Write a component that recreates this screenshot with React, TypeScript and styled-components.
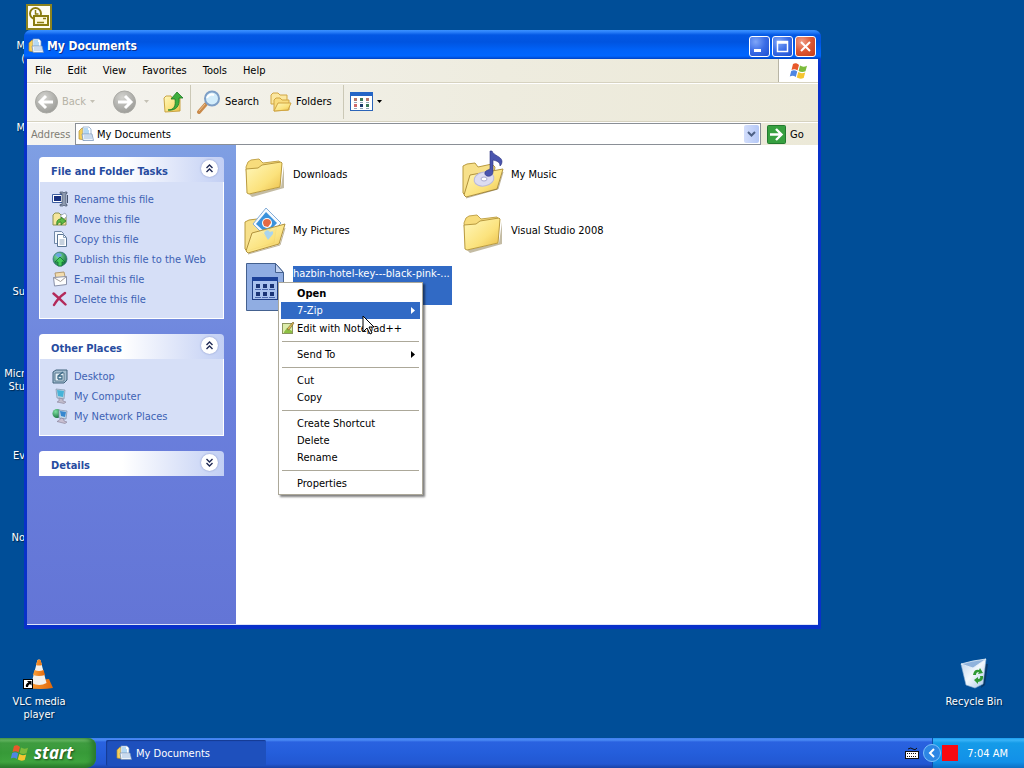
import React from "react";
import styled, { createGlobalStyle, css } from "styled-components";

const Global = createGlobalStyle`
  *, *::before, *::after { box-sizing: border-box; }
  html, body, #root { height: 100%; }
  body {
    margin: 0;
    overflow: hidden;
    font: 11px/13px "DejaVu Sans Condensed", "DejaVu Sans", Tahoma, sans-serif;
    color: #000;
    cursor: default;
  }
  button, input { font: inherit; color: inherit; }
  button { border: 0; padding: 0; background: none; text-align: left; }
  ul { list-style: none; margin: 0; padding: 0; }
  h1, h2 { margin: 0; }
  svg { display: block; flex: none; }
`;

const Screen = styled.div`
  height: 100vh;
  display: flex;
  flex-direction: column;
  background: #004e98;
`;

/* ---------- desktop ---------- */

const Desktop = styled.main`
  position: relative;
  flex: 1;
  min-height: 0;
  overflow: hidden;
`;

const IconGrid = styled.ul`
  height: 100%;
  padding-top: 2px;
  display: grid;
  grid-template-columns: 78px 1fr 100px;
  grid-template-rows: repeat(9, 82px);
`;

const DesktopItem = styled.li<{ $row: number; $column: number }>`
  grid-row: ${(p) => p.$row};
  grid-column: ${(p) => p.$column};
  display: flex;
  flex-direction: column;
  align-items: center;
  gap: 5px;
  color: #fff;
  text-align: center;
  white-space: pre;
  text-shadow: 1px 1px 1px #00264c;
`;

const IconSlot = styled.span`
  height: 32px;
  display: flex;
  align-items: center;
`;

const IconLabel = styled.span<{ $covered?: boolean }>`
  ${(p) =>
    p.$covered &&
    css`
      width: 25px;
      align-self: flex-start;
      text-align: right;
    `}
`;

/* ---------- window ---------- */

const Window = styled.section`
  position: absolute;
  top: 30px;
  left: 24px;
  right: 203px;
  bottom: 109px;
  display: flex;
  flex-direction: column;
  padding: 0 3px 4px;
  border-radius: 7px 7px 0 0;
  background: linear-gradient(to bottom, #0a4fe0, #0831c9 40px);
  overflow: hidden;
`;

const TitleBar = styled.header`
  height: 29px;
  margin: 0 -3px;
  padding: 3px 5px 0 4px;
  display: flex;
  align-items: center;
  gap: 2px;
  background: linear-gradient(
    to bottom,
    #3c92ff 0,
    #2a80fa 2px,
    #0358e4 5px,
    #0054e0 12px,
    #0062f8 20px,
    #0066ff 26px,
    #0042c4 29px
  );
`;

const Title = styled.h1`
  flex: 1;
  color: #fff;
  font-size: 12px;
  line-height: 16px;
  font-weight: bold;
  text-shadow: 1px 1px 0 #0a2f8c;
  display: flex;
  align-items: center;
  gap: 3px;
`;

const CaptionButton = styled.button<{ $close?: boolean }>`
  width: 21px;
  height: 21px;
  border: 1px solid #fff;
  border-radius: 3px;
  display: grid;
  place-items: center;
  background: ${(p) =>
    p.$close
      ? "radial-gradient(circle at 30% 25%, #f0a08a, #dd5733 50%, #c23c1a)"
      : "radial-gradient(circle at 30% 25%, #7fa6f8, #3a6ce6 50%, #1d4fd0)"};
`;

const CaptionGroup = styled.div`
  display: flex;
  gap: 2px;
`;

const Chrome = styled.div`
  background: linear-gradient(to right, #f5f4f0, #eeecdf 60%, #ece9d8);
`;

const MenuBar = styled.nav`
  height: 24px;
  display: flex;
  align-items: stretch;
  border-bottom: 1px solid #d6d2c0;
`;

const MenuBarButton = styled.button`
  padding: 0 8px 1px;
`;

const Throbber = styled.div`
  width: 40px;
  margin-left: auto;
  display: grid;
  place-items: center;
  background: #fff;
  border-left: 1px solid #b8b5a5;
`;

const ToolBar = styled.div`
  height: 39px;
  padding: 0 0 2px 8px;
  display: flex;
  align-items: center;
  border-top: 1px solid #fff;
  border-bottom: 1px solid #d6d2c0;
`;

const ToolButton = styled.button<{ $width: number; $gap?: number; $disabled?: boolean }>`
  width: ${(p) => p.$width}px;
  display: flex;
  align-items: center;
  gap: ${(p) => p.$gap ?? 4}px;
  color: ${(p) => (p.$disabled ? "#b5b2a6" : "#000")};
`;

const Divider = styled.span`
  width: 1px;
  height: 34px;
  margin-right: 6px;
  background: #cbc8b6;
`;

const AddressBar = styled.form`
  height: 23px;
  display: flex;
  align-items: stretch;
  border-top: 1px solid #fff;
`;

const AddressLabel = styled.label`
  width: 48px;
  padding-left: 4px;
  align-self: center;
  color: #7f7c73;
`;

const AddressBox = styled.div`
  flex: 1;
  display: flex;
  align-items: center;
  gap: 3px;
  padding-left: 2px;
  background: #fff;
  border: 1px solid #8a8f96;
`;

const AddressInput = styled.input`
  flex: 1;
  min-width: 0;
  border: 0;
  padding: 0;
  background: transparent;
  outline: 0;
`;

const DropButton = styled.button`
  width: 15px;
  height: 18px;
  margin-right: 1px;
  border-radius: 2px;
  display: grid;
  place-items: center;
  background: linear-gradient(to right, #d3defc, #b4c8f6);
`;

const GoButton = styled.button`
  width: 57px;
  padding-left: 6px;
  display: flex;
  align-items: center;
  gap: 4px;
`;

const WindowBody = styled.div`
  flex: 1;
  min-height: 0;
  display: flex;
  background: #fff;
  border-bottom: 1px solid #dfe5f8;
`;

/* ---------- task pane ---------- */

const TaskPane = styled.aside`
  width: 209px;
  flex: none;
  padding: 12px 12px 0;
  display: flex;
  flex-direction: column;
  gap: 15px;
  background: linear-gradient(to bottom, #7f9fe3, #6a7fdc 55%, #6375d6);
`;

const CardHeader = styled.header`
  height: 25px;
  padding: 3px 6px 0 12px;
  display: flex;
  align-items: center;
  justify-content: space-between;
  border-radius: 4px 4px 0 0;
  background: linear-gradient(to right, #fff 45%, #c2cff4);
`;

const CardTitle = styled.h2`
  font-size: 11px;
  line-height: 13px;
  font-weight: bold;
  color: #274c9f;
`;

const RoundButton = styled.button`
  width: 17px;
  height: 17px;
  margin-bottom: 6px;
  display: grid;
  place-items: center;
  border-radius: 50%;
  background: #fff;
  box-shadow: 0 0 2px #7f8fc4;
`;

const CardList = styled.ul`
  padding: 7px 0 9px 12px;
  border: 1px solid #fff;
  border-top: 0;
  background: #d6dff7;
`;

const TaskLink = styled.a`
  height: 20px;
  display: flex;
  align-items: center;
  gap: 6px;
  color: #3d62b4;
  text-decoration: none;
`;

/* ---------- files ---------- */

const FileArea = styled.div`
  position: relative;
  flex: 1;
  min-width: 0;
`;

const FileGrid = styled.ul`
  padding: 2px 0 0 8px;
  display: grid;
  grid-template-columns: repeat(auto-fill, 218px);
  grid-auto-rows: 56px;
`;

const FileItem = styled.li<{ $selected?: boolean }>`
  grid-column-start: ${(p) => (p.$selected ? 1 : "auto")};
  display: flex;
  align-items: center;
  gap: 7px;
`;

const FileName = styled.span<{ $selected?: boolean }>`
  padding: 0 2px 2px;
  white-space: nowrap;
  ${(p) =>
    p.$selected &&
    css`
      width: 159px;
      height: 39px;
      padding: 1px 0 0;
      margin: 0 0 4px 2px;
      overflow: hidden;
      color: #fff;
      background: #316ac5;
    `}
`;

/* ---------- context menu ---------- */

const ContextMenu = styled.div`
  position: absolute;
  left: 42px;
  top: 137px;
  width: 145px;
  padding: 2px;
  border: 1px solid #aca899;
  background: #fff;
  box-shadow: 2px 2px 2px rgba(0, 0, 0, 0.5);
`;

const ContextItem = styled.button<{ $active?: boolean; $default?: boolean; $tall?: boolean }>`
  width: 100%;
  height: ${(p) => (p.$tall ? 18 : 17)}px;
  display: grid;
  grid-template-columns: 16px 1fr 9px;
  align-items: center;
  white-space: nowrap;
  font-weight: ${(p) => (p.$default ? "bold" : "normal")};
  color: ${(p) => (p.$active ? "#fff" : "#000")};
  background: ${(p) => (p.$active ? "#316ac5" : "transparent")};
`;

const Separator = styled.hr`
  height: 1px;
  margin: 4px 1px;
  border: 0;
  background: #aca899;
`;

const Pointer = styled.svg`
  position: absolute;
  left: 83px;
  top: 32px;
`;

/* ---------- taskbar ---------- */

const TaskBar = styled.footer`
  height: 30px;
  flex: none;
  display: flex;
  align-items: stretch;
  color: #fff;
  background: linear-gradient(to bottom, #3f80f0 0, #4a8bf5 2px, #2a62e0 4px, #245edb 15px, #2257d2 26px, #1941a5);
`;

const StartButton = styled.button`
  width: 96px;
  padding: 0 0 1px 10px;
  display: flex;
  align-items: center;
  gap: 4px;
  border-radius: 0 8px 10px 0;
  font: italic bold 17px/22px "Open Sans", "Noto Sans", sans-serif;
  text-shadow: 1px 1px 2px #1c4a1a;
  background: linear-gradient(to bottom, #5aa95a 0, #6dbd69 2px, #3f9c40 5px, #379a38 15px, #3ea33e 24px, #2a7a2b);
  box-shadow: inset -4px 0 5px #2a7a2e;
`;

const TaskButton = styled.button`
  width: 160px;
  margin: 2px auto 2px 10px;
  padding-left: 10px;
  display: flex;
  align-items: center;
  gap: 4px;
  border-radius: 2px;
  background: #1e50bd;
  box-shadow: inset 1px 1px 1px #143a92;
`;

const LangButton = styled.button`
  align-self: center;
  margin-right: 13px;
`;

const Tray = styled.div`
  width: 92px;
  display: flex;
  align-items: center;
  padding-right: 16px;
  background: linear-gradient(to bottom, #1a9cf0 0, #3ab4f8 2px, #159be8 5px, #1290e8 24px, #0d6fc4);
  border-left: 1px solid #0f4fa8;
`;

const TrayToggle = styled.button`
  margin: 0 1px 0 -10px;
`;

const TrayStatus = styled.span`
  width: 16px;
  height: 16px;
  background: #f80a10;
`;

const Clock = styled.time`
  margin-left: auto;
  white-space: nowrap;
`;

/* ---------- drawings ---------- */

const DocsIcon = ({ size = 16 }: { size?: number }) => (
  <svg width={size} height={size} viewBox="0 0 16 16">
    <path d="M1 5l3-3 3 1v11l-6-1z" fill="#f6cf5c" stroke="#b08f35" strokeWidth=".7" />
    <path d="M5 1h6l2 2v8H5z" fill="#fff" stroke="#7d9bc0" strokeWidth=".7" />
    <path d="M6 3h4M6 5h5M6 7h5" stroke="#69b1e8" />
    <path d="M4 8h10l1.500 6.500H5z" fill="#eef3f9" stroke="#6f8db5" strokeWidth=".7" />
    <path d="M6 10h8M6 12h8" stroke="#8fb4de" strokeWidth=".8" />
  </svg>
);

const Flag = ({ size = 20 }: { size?: number }) => (
  <svg width={size} height={size} viewBox="0 0 20 20">
    <path d="M4 3c2-1 4-1 6 1L8.500 9.500C6.500 8 4.500 8 2.500 9z" fill="#e8592b" />
    <path d="M11 4.500c2 1.500 4.500 1.500 7 .2l-1.500 5.500c-2.500 1.200-4.700 1-6.900-.3z" fill="#7cbb3c" />
    <path d="M2.200 10c2-1 4-1 6 .5L6.800 16c-2-1.500-4-1.500-6-.5z" fill="#4f86e2" />
    <path d="M9.300 11c2 1.400 4.500 1.500 6.900.4L14.700 17c-2.500 1-4.700.8-6.900-.5z" fill="#f5c530" />
  </svg>
);

const Defs = styled.svg`
  position: absolute;
`;

const Gradients = () => (
  <Defs width="0" height="0" aria-hidden="true">
    <defs>
      <linearGradient id="folder" x1="0" y1="0" x2="1" y2="1">
        <stop offset="0" stopColor="#fff8bd" />
        <stop offset=".6" stopColor="#fbe27c" />
        <stop offset="1" stopColor="#e9bb45" />
      </linearGradient>
      <radialGradient id="grey" cx=".4" cy=".3" r=".8">
        <stop offset="0" stopColor="#d4d4d0" />
        <stop offset="1" stopColor="#969692" />
      </radialGradient>
      <radialGradient id="green" cx=".35" cy=".3" r=".8">
        <stop offset="0" stopColor="#7ce0a0" />
        <stop offset="1" stopColor="#126a38" />
      </radialGradient>
      <linearGradient id="bin" x1="0" y1="0" x2="1" y2="1">
        <stop offset="0" stopColor="#b9d0ea" />
        <stop offset=".5" stopColor="#f2f8fd" />
        <stop offset="1" stopColor="#a8c6e6" />
      </linearGradient>
      <linearGradient id="cone" x1="0" y1="0" x2="1" y2="0">
        <stop offset="0" stopColor="#f9a13a" />
        <stop offset="1" stopColor="#e2680a" />
      </linearGradient>
    </defs>
  </Defs>
);

const Folder = () => (
  <svg width="40" height="48" viewBox="0 0 40 48">
    <path d="M5 43l32-7 3-21v22L8 46z" fill="#8a7a4a" opacity=".5" />
    <path d="M2 16l2-5 3-2 8-1 4 4 16-2 2 3v6L4 36z" fill="#f7dc7c" stroke="#c3a54c" />
    <path d="M2 18l12-1 4-3 19-3 1 1-2 24L5 43l-2-1z" fill="url(#folder)" stroke="#b99a3f" />
  </svg>
);

const OpenFolder = ({ children }: { children: React.ReactNode }) => (
  <svg width="40" height="48" viewBox="0 0 40 48" overflow="visible">
    <path d="M1 15l4-2 8-1 3 4 14-3 3 3-3 20L3 44l-2-2z" fill="#f7e08a" stroke="#b99a3f" />
    {children}
  </svg>
);

const PicturesIcon = () => (
  <OpenFolder>
    <path d="M22 1l15 15-14 15L9 17z" fill="#f6fafe" stroke="#83add8" />
    <path d="M22 5l11 11-10 11-11-10z" fill="#3a92dc" />
    <circle cx="23" cy="16" r="5" fill="#fff" />
    <path d="M19 16a4 4 0 0 1 8 0l-3 4-4-1z" fill="#e46a45" />
    <path d="M8 26l33-9-6 20L4 46l-2-2z" fill="url(#folder)" fillOpacity=".93" stroke="#b0913c" />
    <path d="M20 26q3-5 6-1 4-2 3 2l-5 6z" fill="#a8d4ee" />
    <path d="M4 47l32-9 5-17" fill="none" stroke="#7d6a35" opacity=".5" />
  </OpenFolder>
);

const MusicIcon = () => (
  <OpenFolder>
    <path d="M8 24l33-6-6 20L4 46l-2-2z" fill="url(#folder)" stroke="#b0913c" />
    <ellipse cx="22" cy="28" rx="10" ry="7" fill="#dcdcf2" stroke="#b9b9dc" transform="rotate(-12 22 28)" />
    <ellipse cx="22" cy="28" rx="3" ry="2" fill="#fff" stroke="#a9a9cf" />
    <path
      d="M28 0h2c2 5 9 5 10 10 0 3-1 4-2 5 0-4-3-5-7-6v12c0 3-3 5-6 4s-3-5 1-6l2-1z"
      fill="#4a55ae"
      stroke="#2b3380"
      strokeWidth=".6"
    />
    <path d="M4 47l32-9 5-17" fill="none" stroke="#7d6a35" opacity=".5" />
  </OpenFolder>
);

const SelectedFileIcon = () => (
  <svg width="40" height="48" viewBox="0 0 40 48">
    <path d="M2.500.5h29l8 9v38h-37z" fill="#90ade2" stroke="#44618f" />
    <path d="M31.500.5v9h8z" fill="#c5d4f2" stroke="#44618f" />
    <rect x="8.500" y="14.500" width="25" height="22" fill="#a9c2ef" stroke="#203f86" />
    <path d="M8 14h26v4H8z" fill="#1c4199" />
    {[21, 29].map((y) =>
      [12, 19, 26].map((x) => (
        <React.Fragment key={`${x}-${y}`}>
          <rect x={x} y={y} width="4" height="4" fill="#1b3577" />
          <path d={`M${x - 1} ${y + 5}.5h6`} stroke="#4a68ae" />
        </React.Fragment>
      )),
    )}
  </svg>
);

const RoundArrow = ({ forward }: { forward?: boolean }) => (
  <svg width="23" height="24" viewBox="0 0 23 24">
    <circle cx="11.500" cy="12" r="11" fill="url(#grey)" stroke="#a9a9a4" />
    <path
      d={forward ? "M5 12h12M12 6l6 6-6 6" : "M18 12H6M11 6l-6 6 6 6"}
      fill="none"
      stroke="#fff"
      strokeWidth="3"
    />
  </svg>
);

const Caret = ({ color = "#000" }: { color?: string }) => (
  <svg width="5" height="3" viewBox="0 0 5 3">
    <path d="M0 0h5L2.500 3z" fill={color} />
  </svg>
);

const UpIcon = () => (
  <svg width="21" height="22" viewBox="0 0 21 22">
    <path d="M1 7l2-2h5l1 2h8v13l-15 1z" fill="url(#folder)" stroke="#c9a444" />
    <path d="M5 19c6 0 8-4 7-11H8l6-7 6 6h-4c1 8-3 13-11 12z" fill="#3fae3d" stroke="#1c7a26" strokeWidth=".8" />
  </svg>
);

const SearchIcon = () => (
  <svg width="24" height="24" viewBox="0 0 24 24">
    <path d="M2 22l7-8" stroke="#c98a4a" strokeWidth="4" strokeLinecap="round" />
    <path d="M2 21l6-7" stroke="#efc08c" strokeWidth="1" />
    <circle cx="15" cy="8.500" r="7" fill="#d3edfb" stroke="#7e9fc6" strokeWidth="2" />
    <path d="M10 8c1-3 4-4 7-3" stroke="#fff" strokeWidth="2" fill="none" />
  </svg>
);

const FoldersIcon = () => (
  <svg width="22" height="22" viewBox="0 0 22 22">
    <path d="M1 4l2-2h5l2 2h7v9H1z" fill="#fbe7a0" stroke="#d0a542" />
    <path d="M4 9l2-2h4l2 2h7v10L4 20z" fill="#f9dc7d" stroke="#d0a542" />
    <path d="M8 12h13l-3 7-14 1z" fill="url(#folder)" stroke="#d0a542" />
  </svg>
);

const ViewsIcon = () => (
  <svg width="23" height="20" viewBox="0 0 23 20">
    <rect x=".5" y=".5" width="22" height="18" fill="#fff" stroke="#2b64b8" />
    <path d="M0 0h23v4H0z" fill="#2465c6" />
    <path d="M4 6h3v3H4zM16 6h3v3h-3z" fill="#b5786c" />
    <path d="M10 6h3v3h-3zM16 12h3v3h-3z" fill="#3c7a58" />
    <path d="M4 12h3v3H4z" fill="#d06a6a" />
    <path d="M10 12h3v3h-3z" fill="#1c3a6a" />
    <path d="M4 10.500h3M10 10.500h3M16 10.500h3M4 16.500h3M10 16.500h3M16 16.500h3" stroke="#93a4b8" />
  </svg>
);

const GoIcon = () => (
  <svg width="19" height="19" viewBox="0 0 19 19">
    <rect x=".5" y=".5" width="18" height="18" rx="1" fill="#37a040" stroke="#237a30" />
    <path d="M3 9.500h11M9 4l5.500 5.500L9 15" fill="none" stroke="#fff" strokeWidth="2.400" />
  </svg>
);

const Chevrons = ({ down }: { down?: boolean }) => (
  <svg width="9" height="9" viewBox="0 0 9 9">
    <path
      d={down ? "M1.500 1l3 3 3-3M1.500 5l3 3 3-3" : "M1.500 4l3-3 3 3M1.500 8l3-3 3 3"}
      fill="none"
      stroke="#1f2a55"
      strokeWidth="1.400"
    />
  </svg>
);

const taskArt: Record<string, React.ReactNode> = {
  rename: (
    <>
      <path d="M.5 3.500h10v8H.5z" fill="#fff" stroke="#3c5ea0" />
      <path d="M2 5h7v5H2z" fill="#17307e" />
      <path d="M8 1h3l1 1 1-1h2v1.500h-1v11h1V15h-2l-1-1-1 1H8v-1.500h2v-11H8z" fill="#8f9bb0" stroke="#46546f" strokeWidth=".7" />
      <path d="M15.500 4v8" stroke="#46546f" />
    </>
  ),
  move: (
    <>
      <path d="M1 4l2-2h4l2 2h5v10H1z" fill="#f5e59a" stroke="#8c9350" />
      <path d="M8 5l5-3 2 3-3 3z" fill="#fff" stroke="#8899b0" strokeWidth=".7" />
      <path d="M5 14c-1-4 1-6 4-6V6l5 4-5 4v-3c-2 0-3 1-4 3z" fill="#5cb944" stroke="#2c7a25" strokeWidth=".8" />
    </>
  ),
  copy: (
    <>
      <path d="M2.500.5h7l2 2v10h-9z" fill="#f4f8fd" stroke="#7188a8" />
      <path d="M5.500 3.500h6l3 3v9h-9z" fill="#fff" stroke="#5c7695" />
      <path d="M11.500 3.500v3h3M7.500 9h5M7.500 11h5M7.500 13h5" fill="none" stroke="#8da3bd" />
    </>
  ),
  publish: (
    <>
      <circle cx="8" cy="8" r="7" fill="url(#green)" stroke="#2a6a78" strokeWidth=".7" />
      <path d="M3 4q4-4 7 0l-3 3z" fill="#6ba5e0" />
      <path d="M8 6l5 5h-3v4H6v-4H3z" fill="#45cc5c" stroke="#107030" strokeWidth=".8" />
    </>
  ),
  mail: (
    <>
      <path d="M3 2l9-1 2 9-9 3z" fill="#f3dcae" stroke="#b39a70" />
      <path d="M1.500 6.500l13-1v8l-12 1.500z" fill="#fdfdfd" stroke="#8890a8" />
      <path d="M1.500 6.500l7 4 6-5" fill="none" stroke="#a09a98" />
    </>
  ),
  remove: (
    <path
      d="M1.500 2.500q6 5 12 11M13 2Q6 7 2 14"
      fill="none"
      stroke="#b3295a"
      strokeWidth="2.400"
      strokeLinecap="round"
    />
  ),
  desktop: (
    <>
      <path d="M1 4l3-2h11v10l-3 3H1z" fill="#a4bed0" stroke="#41627c" />
      <path d="M3 5h9v8H3z" fill="#e7f1f6" stroke="#587890" />
      <path d="M6 11V8l5-4M6 8h4v3H6" fill="none" stroke="#3b6a86" strokeWidth="1.300" />
    </>
  ),
  computer: (
    <>
      <path d="M4 1l9 1-1 9-7-1z" fill="#bcd0e0" stroke="#7f92a8" strokeWidth=".7" />
      <path d="M5 2l7 1-1 6-5-1z" fill="#45b3d8" />
      <path d="M7 10l4 1v2l3 1-2 1.500-7-1.500 2-1z" fill="#c0bccb" stroke="#8a8298" strokeWidth=".6" />
    </>
  ),
  network: (
    <>
      <circle cx="5" cy="5.500" r="4.500" fill="url(#green)" />
      <path d="M7 2l8 1-1 8-7-1z" fill="#c3d8e8" stroke="#788ba8" strokeWidth=".7" />
      <path d="M8 3l6 1-1 5-4-1z" fill="#3687cf" />
      <path d="M9 10l3 1v2l3 1-2 1.500-8-2 2-1z" fill="#c8bfd0" stroke="#857c96" strokeWidth=".6" />
    </>
  ),
};

const TaskIcon = ({ name }: { name: string }) => (
  <svg width="16" height="16" viewBox="0 0 16 16">
    {taskArt[name]}
  </svg>
);

const OutlookIcon = () => (
  <svg width="26" height="28" viewBox="0 0 26 28">
    <rect x="1" y="1" width="24" height="24" fill="#fffdf2" stroke="#8c8420" strokeWidth="2" />
    <circle cx="9.500" cy="9.500" r="5.500" fill="#fff" stroke="#8a7c10" strokeWidth="2" />
    <path d="M9.500 6v4h3" fill="none" stroke="#8a7c10" strokeWidth="1.500" />
    <rect x="8" y="12" width="14" height="9" fill="#fff9d8" stroke="#8a7c10" strokeWidth="2" />
    <path d="M11 18.500h7M17 14.500h3" stroke="#8a7c10" strokeWidth="1.500" />
  </svg>
);

const VlcIcon = () => (
  <svg width="32" height="32" viewBox="0 0 32 32">
    <path d="M5 23l21-2 4 9q-12 2-26 0z" fill="url(#cone)" />
    <path d="M14.500 2q1.500-1 3 0l6 23q-7 4-15 0z" fill="#f2f0ec" />
    <path d="M14.500 2q1.500-1 3 0l1.500 5q-3 1-6 0zM11.500 12q4.500 2 9 0l1.500 5q-6 2-12 0z" fill="url(#cone)" />
    <rect x=".5" y="21.500" width="9" height="9" fill="#fff" stroke="#000" />
    <path d="M3 29q-1-3 2.500-4.500L4 23h4.500v4.500L7 26q-2 1-2 3z" fill="#000" />
  </svg>
);

const BinIcon = () => (
  <svg width="32" height="32" viewBox="0 0 32 32">
    <path d="M26 6l4 0-3 21-4 3z" fill="#0a2b4c" opacity=".6" />
    <path d="M3 6l11 3 14-8-3 25-8 4-9-3z" fill="url(#bin)" stroke="#8fb0d2" strokeWidth=".6" />
    <path d="M3 6l12-3 13-2-13 9z" fill="#8fb2dc" stroke="#e8f2fb" strokeWidth=".8" />
    <path d="M15 17q1-6 6-5l1-2 3 5-5 1 1-2q-3 0-3 3zM25 18q1 5-5 6v2l-4-4 4-3v2q3 0 2-3z" fill="#2f9a35" />
  </svg>
);

const NotepadIcon = () => (
  <svg width="14" height="14" viewBox="0 0 14 14">
    <rect x="1.500" y="2.500" width="10" height="10" fill="#dcecaa" stroke="#8b9560" />
    <path d="M3 11l3-4 5 3v2H3z" fill="#8cc043" />
    <path d="M6 8l6-7 1 1-5 7z" fill="#e2bb52" stroke="#6b5a30" strokeWidth=".6" />
  </svg>
);

const SubmenuArrow = () => (
  <svg width="4" height="7" viewBox="0 0 4 7">
    <path d="M0 0l4 3.500L0 7z" fill="currentColor" />
  </svg>
);

/* ---------- data ---------- */

type DesktopEntry = { row: number; column: number; label: string; icon?: React.ReactNode; covered?: boolean };

const desktopItems: DesktopEntry[] = [
  { row: 1, column: 1, label: "M\n(", icon: <OutlookIcon />, covered: true },
  { row: 2, column: 1, label: "M", covered: true },
  { row: 4, column: 1, label: "Su", covered: true },
  { row: 5, column: 1, label: "Micr\nStu", covered: true },
  { row: 6, column: 1, label: "Ev", covered: true },
  { row: 7, column: 1, label: "No", covered: true },
  { row: 9, column: 1, label: "VLC media\nplayer", icon: <VlcIcon /> },
  { row: 9, column: 3, label: "Recycle Bin", icon: <BinIcon /> },
];

const cards = [
  {
    title: "File and Folder Tasks",
    links: [
      ["rename", "Rename this file"],
      ["move", "Move this file"],
      ["copy", "Copy this file"],
      ["publish", "Publish this file to the Web"],
      ["mail", "E-mail this file"],
      ["remove", "Delete this file"],
    ],
  },
  {
    title: "Other Places",
    links: [
      ["desktop", "Desktop"],
      ["computer", "My Computer"],
      ["network", "My Network Places"],
    ],
  },
  { title: "Details", links: [] },
];

const files = [
  { name: "Downloads", icon: <Folder /> },
  { name: "My Music", icon: <MusicIcon /> },
  { name: "My Pictures", icon: <PicturesIcon /> },
  { name: "Visual Studio 2008", icon: <Folder /> },
  { name: "hazbin-hotel-key---black-pink-...", icon: <SelectedFileIcon />, selected: true },
];

type Entry = { label: string; active?: boolean; main?: boolean; icon?: React.ReactNode; more?: boolean };

const menuGroups: Entry[][] = [
  [
    { label: "Open", main: true },
    { label: "7-Zip", active: true, more: true },
    { label: "Edit with Notepad++", icon: <NotepadIcon /> },
  ],
  [{ label: "Send To", more: true }],
  [{ label: "Cut" }, { label: "Copy" }],
  [{ label: "Create Shortcut" }, { label: "Delete" }, { label: "Rename" }],
  [{ label: "Properties" }],
];

export default function App() {
  return (
    <Screen>
      <Global />
      <Gradients />
      <Desktop>
        <IconGrid>
          {desktopItems.map((item) => (
            <DesktopItem key={`${item.row}-${item.column}`} $row={item.row} $column={item.column}>
              <IconSlot>{item.icon}</IconSlot>
              <IconLabel $covered={item.covered}>{item.label}</IconLabel>
            </DesktopItem>
          ))}
        </IconGrid>

        <Window>
          <TitleBar>
            <Title>
              <DocsIcon />
              My Documents
            </Title>
            <CaptionGroup>
              <CaptionButton aria-label="Minimize">
                <svg width="13" height="13" viewBox="0 0 13 13">
                  <path d="M1 9h7v3H1z" fill="#fff" />
                </svg>
              </CaptionButton>
              <CaptionButton aria-label="Maximize">
                <svg width="13" height="13" viewBox="0 0 13 13">
                  <path d="M1.500 1.500h10v10h-10zM1 3h11" fill="none" stroke="#fff" strokeWidth="1.500" />
                </svg>
              </CaptionButton>
              <CaptionButton aria-label="Close" $close>
                <svg width="13" height="13" viewBox="0 0 13 13">
                  <path d="M2 2l9 9M11 2l-9 9" stroke="#fff" strokeWidth="2" />
                </svg>
              </CaptionButton>
            </CaptionGroup>
          </TitleBar>

          <Chrome>
            <MenuBar>
              {["File", "Edit", "View", "Favorites", "Tools", "Help"].map((name) => (
                <MenuBarButton key={name}>{name}</MenuBarButton>
              ))}
              <Throbber>
                <Flag />
              </Throbber>
            </MenuBar>
            <ToolBar>
              <ToolButton $width={78} $disabled>
                <RoundArrow />
                Back
                <Caret color="#c4c1b5" />
              </ToolButton>
              <ToolButton $width={50} $gap={8} $disabled aria-label="Forward">
                <RoundArrow forward />
                <Caret color="#c4c1b5" />
              </ToolButton>
              <ToolButton $width={27} aria-label="Up">
                <UpIcon />
              </ToolButton>
              <Divider />
              <ToolButton $width={73}>
                <SearchIcon />
                Search
              </ToolButton>
              <ToolButton $width={73}>
                <FoldersIcon />
                Folders
              </ToolButton>
              <Divider />
              <ToolButton $width={40} aria-label="Views">
                <ViewsIcon />
                <Caret />
              </ToolButton>
            </ToolBar>
            <AddressBar onSubmit={(e) => e.preventDefault()}>
              <AddressLabel htmlFor="address">Address</AddressLabel>
              <AddressBox>
                <DocsIcon />
                <AddressInput id="address" defaultValue="My Documents" />
                <DropButton type="button" aria-label="Show addresses">
                  <svg width="9" height="6" viewBox="0 0 9 6">
                    <path d="M1 1l3.500 3.500L8 1" fill="none" stroke="#4d6185" strokeWidth="2" />
                  </svg>
                </DropButton>
              </AddressBox>
              <GoButton>
                <GoIcon />
                Go
              </GoButton>
            </AddressBar>
          </Chrome>

          <WindowBody>
            <TaskPane>
              {cards.map((card) => (
                <section key={card.title}>
                  <CardHeader>
                    <CardTitle>{card.title}</CardTitle>
                    <RoundButton aria-label={`Toggle ${card.title}`}>
                      <Chevrons down={card.links.length === 0} />
                    </RoundButton>
                  </CardHeader>
                  {card.links.length > 0 && (
                    <CardList>
                      {card.links.map(([icon, label]) => (
                        <li key={label}>
                          <TaskLink href="#">
                            <TaskIcon name={icon} />
                            {label}
                          </TaskLink>
                        </li>
                      ))}
                    </CardList>
                  )}
                </section>
              ))}
            </TaskPane>

            <FileArea>
              <FileGrid>
                {files.map((file) => (
                  <FileItem key={file.name} $selected={file.selected}>
                    {file.icon}
                    <FileName $selected={file.selected}>{file.name}</FileName>
                  </FileItem>
                ))}
              </FileGrid>
              <ContextMenu role="menu">
                {menuGroups.map((group, i) => (
                  <React.Fragment key={group[0].label}>
                    {i > 0 && <Separator />}
                    {group.map((entry) => (
                      <ContextItem
                        key={entry.label}
                        role="menuitem"
                        $active={entry.active}
                        $default={entry.main}
                        $tall={Boolean(entry.icon)}
                      >
                        <span>{entry.icon}</span>
                        <span>{entry.label}</span>
                        {entry.more && <SubmenuArrow />}
                      </ContextItem>
                    ))}
                  </React.Fragment>
                ))}
                <Pointer width="13" height="21" viewBox="0 0 13 21">
                  <path d="M1 1v16l4-4 3 6 2-1-3-6h5z" fill="#fff" stroke="#000" />
                </Pointer>
              </ContextMenu>
            </FileArea>
          </WindowBody>
        </Window>
      </Desktop>

      <TaskBar>
        <StartButton>
          <Flag />
          start
        </StartButton>
        <TaskButton>
          <DocsIcon />
          My Documents
        </TaskButton>
        <LangButton aria-label="Keyboard">
          <svg width="14" height="12" viewBox="0 0 14 12">
            <path d="M3 2q3-2 5 0t4-1" fill="none" stroke="#111" />
            <rect x=".5" y="4.500" width="13" height="7" fill="#fff" stroke="#111" />
            <path d="M2 6.500h10M2 9.500h10" stroke="#111" strokeDasharray="1 1" />
          </svg>
        </LangButton>
        <Tray>
          <TrayToggle aria-label="Show hidden icons">
            <svg width="18" height="18" viewBox="0 0 18 18">
              <circle cx="9" cy="9" r="8.500" fill="#2c86e4" stroke="#7dc0f8" />
              <path d="M11 5L7 9l4 4" fill="none" stroke="#fff" strokeWidth="2" />
            </svg>
          </TrayToggle>
          <TrayStatus />
          <Clock>7:04 AM</Clock>
        </Tray>
      </TaskBar>
    </Screen>
  );
}
